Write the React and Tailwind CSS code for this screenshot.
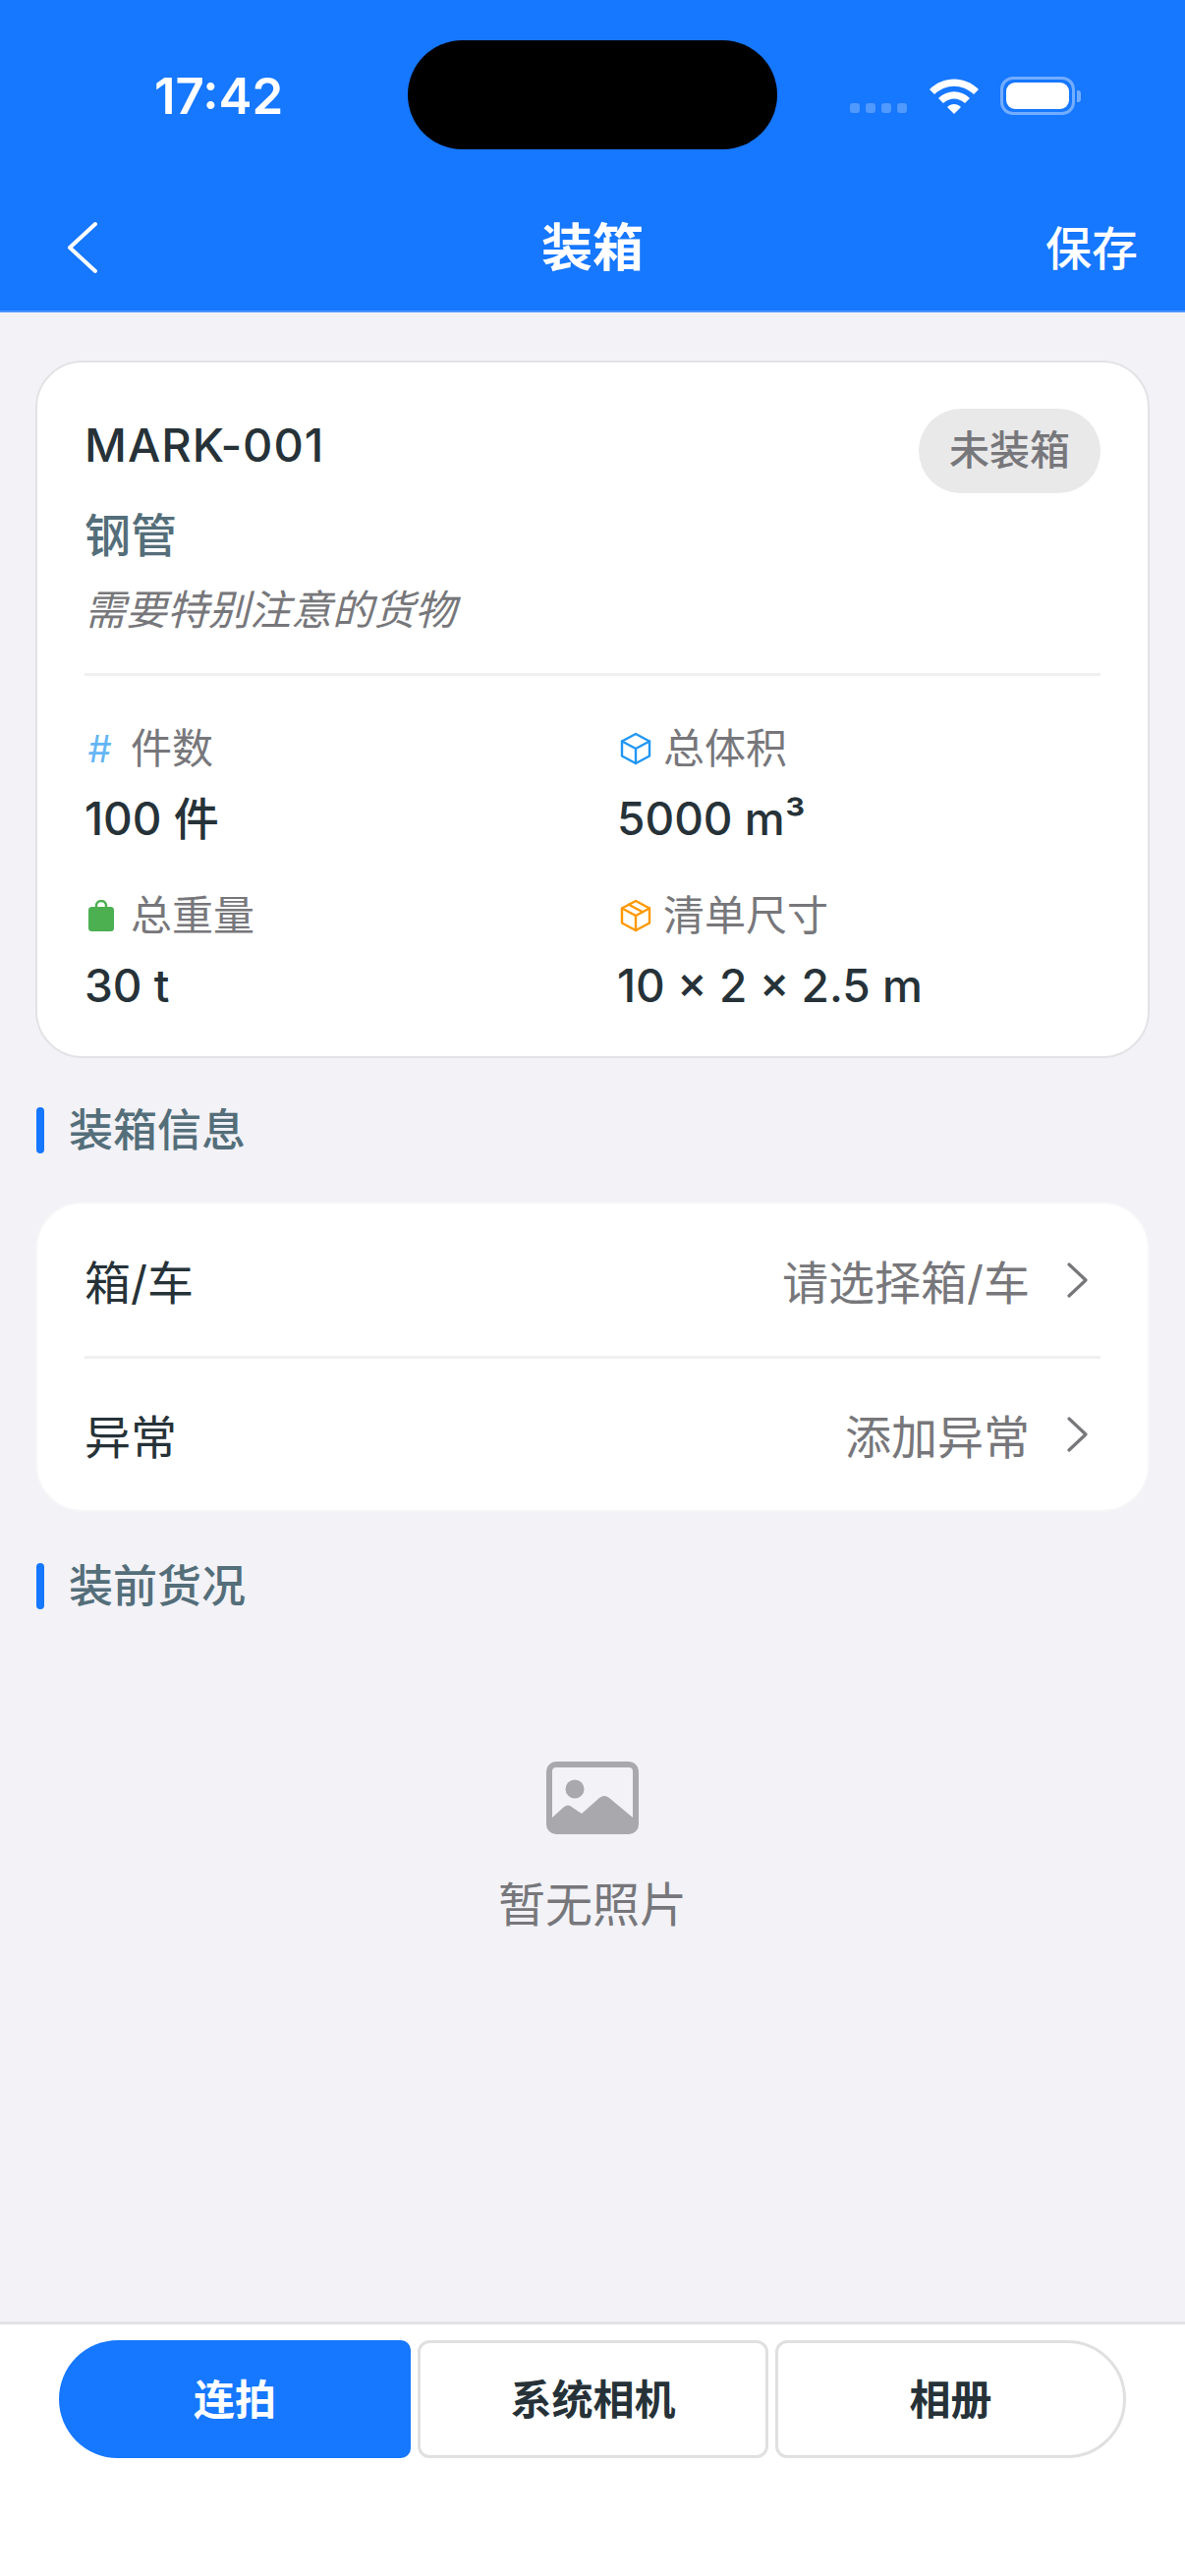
import React from 'react';

const CJK = "font-['Inter','Noto_Sans_CJK_SC',sans-serif]";

function StatusBar() {
  return (
    <div className="h-[190px] relative flex">
      <div className="absolute left-[415px] top-[41px] w-[376px] h-[111px] rounded-[56px] bg-black" />
      <div className="absolute left-[157px] top-[68px] text-[51px] leading-[60px] font-semibold text-white">17:42</div>
      <div className="absolute left-[865px] top-[105px] flex gap-[6px]">
        {[0, 1, 2, 3].map((i) => (
          <div key={i} className="w-[10px] h-[10px] rounded-[3px] bg-white/25" />
        ))}
      </div>
      <svg className="absolute left-[945px] top-[78px]" width="52" height="38" viewBox="0 0 52 38">
        <path d="M1 13 C15 -1 37 -1 51 13 L46 18 C34 7 18 7 6 18 Z" fill="#fff" />
        <path d="M10 22 C19 13 33 13 42 22 L37 27 C30 21 22 21 15 27 Z" fill="#fff" />
        <path d="M19 31 C23 27 29 27 33 31 L26 38 Z" fill="#fff" />
      </svg>
      <div className="absolute left-[1018px] top-[78px] w-[76px] h-[39px] rounded-[13px] border-[3px] border-white/40 p-[3px]">
        <div className="w-full h-full rounded-[9px] bg-white" />
      </div>
      <div className="absolute left-[1096px] top-[92px] w-[4px] h-[12px] rounded-r-[3px] bg-white/40" />
    </div>
  );
}

function Header() {
  return (
    <div className="bg-[#1677ff] h-[318px] flex flex-col border-b-[2px] border-[#4a94ff]">
      <StatusBar />
      <div className="flex-1 relative flex items-center justify-center">
        <svg className="absolute left-[67px] top-[35px]" width="34" height="54" viewBox="0 0 34 54" fill="none">
          <path d="M30 3 L4 27 L30 51" stroke="#fff" strokeWidth="4" strokeLinecap="round" strokeLinejoin="round" />
        </svg>
        <span className="text-[52px] leading-[60px] font-bold text-white -mt-[1px]">装箱</span>
        <span className="absolute right-[48px] top-[33px] text-[47px] leading-[60px] font-medium text-white">保存</span>
      </div>
    </div>
  );
}

function Cube({ color, top }) {
  return (
    <svg width="32" height="34" viewBox="0 0 32 34" fill="none" stroke={color} strokeWidth="2.4" strokeLinejoin="round" strokeLinecap="round">
      <path d="M16 2 L30 9.5 V24.5 L16 32 L2 24.5 V9.5 Z" />
      <path d="M2 9.5 L16 17 L30 9.5 M16 17 V32" />
      {top && <path d="M9 5.8 L23 13.2" />}
    </svg>
  );
}

function Stat({ icon, label, value }) {
  return (
    <div className="flex flex-col">
      <div className="flex items-center h-[52px]">
        <div className="w-[47px] pl-[3px] shrink-0">{icon}</div>
        <span className="text-[42px] leading-[52px] text-[#77777b]">{label}</span>
      </div>
      <div className="mt-[18px] text-[46px] leading-[54px] font-medium text-[#263238]">{value}</div>
    </div>
  );
}

function SectionTitle({ children }) {
  return (
    <div className="flex items-center h-[48px] pl-[37px] gap-[25px]">
      <div className="w-[8px] h-[47px] rounded-[4px] bg-[#1677ff]" />
      <span className="text-[45px] leading-[48px] font-medium text-[#546e7a] mt-[2px]">{children}</span>
    </div>
  );
}

function Row({ label, value, heightClass }) {
  return (
    <div className={`flex items-center ${heightClass}`}>
      <span className="text-[47px] leading-[60px] text-[#263238] mt-[6px]">{label}</span>
      <span className="ml-auto text-[47px] leading-[60px] text-[#77777b] mt-[6px]">{value}</span>
      <svg className="ml-[38px] mr-[13px]" width="21" height="36" viewBox="0 0 21 36" fill="none">
        <path d="M2 2 L19 18 L2 34" stroke="#77777b" strokeWidth="3.2" strokeLinecap="round" strokeLinejoin="round" />
      </svg>
    </div>
  );
}

export default function App() {
  return (
    <div className={`w-[1206px] h-[2622px] bg-[#f2f2f7] flex flex-col overflow-hidden ${CJK}`}>
      <Header />
      <div className="flex-1 flex flex-col">
        <div className="mt-[49px] mx-[36px] h-[710px] rounded-[48px] border-[2px] border-[#e3e3e6] bg-white px-[48px] pt-[47px] flex flex-col">
          <div className="flex items-start justify-between">
            <div className="text-[47px] leading-[56px] font-medium text-[#263238] tracking-[1px] mt-[9px]">MARK-001</div>
            <div className="h-[86px] w-[185px] rounded-[43px] bg-[#e9e9ea] flex items-center justify-center text-[41px] font-medium text-[#77777b]">未装箱</div>
          </div>
          <div className="mt-[13px] text-[47px] leading-[60px] font-medium text-[#546e7a]">钢管</div>
          <div className="mt-[20px] text-[42px] leading-[52px] italic text-[#77777b]">需要特别注意的货物</div>
          <div className="mt-[38px] h-[3px] bg-[#f0f0f0]" />
          <div className="mt-[48px] grid grid-cols-2 gap-y-[46px]">
            <Stat
              label="件数"
              value="100 件"
              icon={<span className="block text-[38px] leading-[40px] italic text-[#64b5f6] font-normal">#</span>}
            />
            <div className="pl-[25px]">
              <Stat label="总体积" value="5000 m³" icon={<Cube color="#2196f3" />} />
            </div>
            <Stat
              label="总重量"
              value="30 t"
              icon={
                <svg width="28" height="32" viewBox="0 0 28 32" fill="none">
                  <path d="M9 8 V6 A5 5 0 0 1 19 6 V8" stroke="#4caf50" strokeWidth="2.4" />
                  <rect x="1" y="7" width="26" height="25" rx="3.5" fill="#4caf50" />
                </svg>
              }
            />
            <div className="pl-[25px]">
              <Stat label="清单尺寸" value="10 × 2 × 2.5 m" icon={<Cube color="#ff9800" top />} />
            </div>
          </div>
        </div>
        <div className="mt-[49px]">
          <SectionTitle>装箱信息</SectionTitle>
        </div>
        <div className="mt-[49px] mx-[36px] rounded-[48px] border-[2px] border-[#f6f6f8] bg-white px-[48px]">
          <Row label="箱/车" value="请选择箱/车" heightClass="h-[155px]" />
          <div className="h-[3px] bg-[#f0f0f0]" />
          <Row label="异常" value="添加异常" heightClass="h-[154px]" />
        </div>
        <div className="mt-[51px]">
          <SectionTitle>装前货况</SectionTitle>
        </div>
        <div className="mt-[155px] flex flex-col items-center">
          <svg width="94" height="74" viewBox="0 0 94 74">
            <path fillRule="evenodd" fill="#a8a8ad" d="M10 0 H84 A10 10 0 0 1 94 10 V64 A10 10 0 0 1 84 74 H10 A10 10 0 0 1 0 64 V10 A10 10 0 0 1 10 0 Z M10 6 A4 4 0 0 0 6 10 V57 L17 47 Q22 42 27 47 L36 53 L54 37 Q59 33 64 37 L88 57 V10 A4 4 0 0 0 84 6 Z" />
            <circle cx="29" cy="28" r="9.5" fill="#a8a8ad" />
          </svg>
          <div className="mt-[42px] text-[48px] leading-[60px] text-[#77777b]">暂无照片</div>
        </div>
      </div>
      <div className="h-[259px] bg-white border-t-[3px] border-[#e3e3e6] px-[60px] pt-[16px] flex gap-[7px]">
        <div className="w-[358px] h-[120px] rounded-l-[60px] rounded-r-[10px] bg-[#1677ff] flex items-center justify-center text-[42px] font-semibold text-white">连拍</div>
        <div className="w-[357px] h-[120px] rounded-[12px] border-[3px] border-[#e0e0e0] flex items-center justify-center text-[42px] font-bold text-[#263238]">系统相机</div>
        <div className="w-[357px] h-[120px] rounded-l-[12px] rounded-r-[60px] border-[3px] border-[#e0e0e0] flex items-center justify-center text-[42px] font-bold text-[#263238]">相册</div>
      </div>
    </div>
  );
}
